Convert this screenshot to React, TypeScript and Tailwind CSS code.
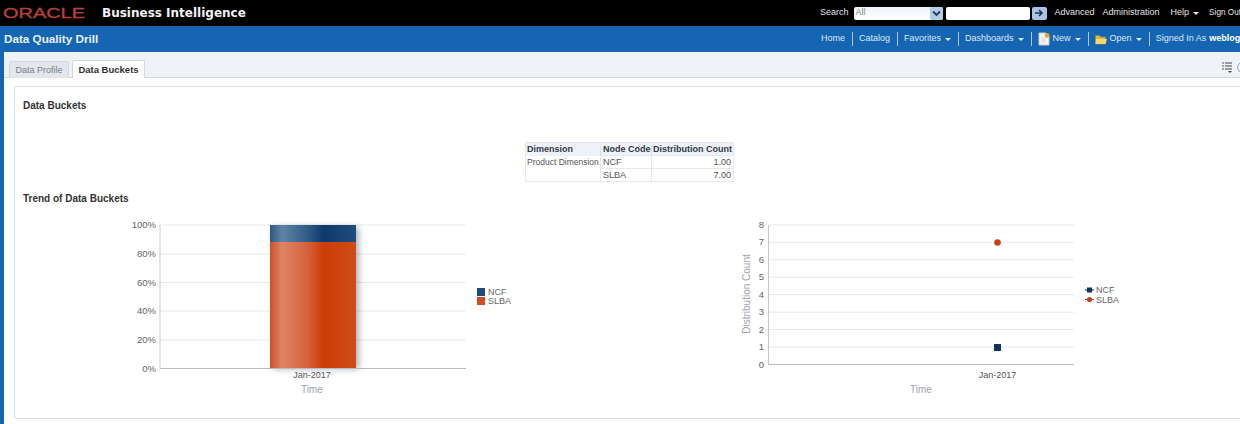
import React from "react";

const font = "font-['Liberation_Sans',Arial,sans-serif]";

function Caret({ color = "border-t-[#dce9f5]" }: { color?: string }) {
  return (
    <span
      className={`ml-[4px] inline-block h-0 w-0 border-x-[3px] border-t-[3px] border-x-transparent ${color}`}
    />
  );
}

function Sep() {
  return <span className="ml-[7px] mr-[6px] h-[14px] w-px shrink-0 bg-[#a9c6e2]" />;
}

function NewIcon() {
  return (
    <svg width="12" height="14" viewBox="0 0 12 14" className="mr-[3px]">
      <path d="M1 1h7l3 3v9H1z" fill="#f7f7f2" stroke="#c9c9c0" />
      <circle cx="9" cy="3.5" r="2.4" fill="#f0a030" />
      <path d="M3 6h5M3 8h5M3 10h5" stroke="#d5d5d5" />
    </svg>
  );
}

function OpenIcon() {
  return (
    <svg width="12" height="11" viewBox="0 0 12 11" className="mr-[3px]">
      <path d="M0.5 1.5h4l1 1.5h5v7h-10z" fill="#d9b64c" stroke="#a98a2c" strokeWidth="0.6" />
      <path d="M1 5h11l-1.5 5H0.5z" fill="#f2d878" />
    </svg>
  );
}

function TopBar() {
  return (
    <div className="flex h-[26px] items-center whitespace-nowrap bg-black text-[9px] text-[#e4e4e4]">
      <div className="flex w-[820px] shrink-0 items-center">
        <svg width="90" height="20" viewBox="0 0 90 20" className="ml-[2px]">
          <text
            x="1"
            y="15"
            fontFamily="Liberation Sans"
            fontSize="14"
            fill="#b8403a"
            stroke="#b8403a"
            strokeWidth="0.3"
            textLength="82"
            lengthAdjust="spacingAndGlyphs"
          >
            ORACLE
          </text>
        </svg>
        <span className="ml-[10px] font-['DejaVu_Sans',sans-serif] text-[12px] font-bold text-[#f2f2f2]">
          Business Intelligence
        </span>
      </div>
      <span>Search</span>
      <div className="ml-[5px] flex h-[13px] w-[89px] shrink-0 items-center justify-between rounded-[2px] bg-gradient-to-b from-[#eef3fa] to-white pl-[2px]">
        <span className="text-[9px] text-[#8a8a8a]">All</span>
        <span className="flex h-[13px] w-[13px] items-center justify-center rounded-[2px] bg-[#b4cbe4]">
          <svg width="9" height="7" viewBox="0 0 9 7">
            <path d="M1 1.5l3.5 3.5L8 1.5" fill="none" stroke="#23405f" strokeWidth="1.8" />
          </svg>
        </span>
      </div>
      <div className="ml-[3px] h-[13px] w-[84px] shrink-0 rounded-[2px] bg-white" />
      <span className="ml-[2px] flex h-[13px] w-[15px] shrink-0 items-center justify-center rounded-[2px] bg-[#a9c4e2]">
        <svg width="10" height="8" viewBox="0 0 10 8">
          <path d="M1 4h6M5 1l3 3-3 3" fill="none" stroke="#1c3550" strokeWidth="1.6" />
        </svg>
      </span>
      <span className="ml-[8px]">Advanced</span>
      <span className="ml-[8px]">Administration</span>
      <span className="ml-[11px] flex items-center">
        Help
        <Caret color="border-t-[#e4e4e4]" />
      </span>
      <span className="ml-[10px] text-[8.2px]">Sign Out</span>
    </div>
  );
}

function BlueBar() {
  return (
    <div className="flex h-[26px] items-center whitespace-nowrap bg-[#1565b2] text-[9px] text-[#dce9f5]">
      <div className="w-[821px] shrink-0 pl-[4px] text-[11.7px] font-bold text-[#e6f0fa]">
        Data Quality Drill
      </div>
      <span>Home</span>
      <Sep />
      <span>Catalog</span>
      <Sep />
      <span className="flex items-center">
        Favorites
        <Caret />
      </span>
      <Sep />
      <span className="flex items-center">
        Dashboards
        <Caret />
      </span>
      <Sep />
      <span className="flex items-center">
        <NewIcon />
        New
        <Caret />
      </span>
      <Sep />
      <span className="flex items-center">
        <OpenIcon />
        Open
        <Caret />
      </span>
      <Sep />
      <span>Signed In As</span>
      <span className="ml-[3px] font-bold text-white">weblogic</span>
    </div>
  );
}

function Tabs() {
  return (
    <div className="flex h-[26px] items-end justify-between rounded-tl-[3px] border-b border-[#d5d9dd] bg-[#eef2f6] pl-[5px]">
      <div className="flex items-end gap-[3px] text-[9px]">
        <div className="-mb-px flex h-[17px] w-[60px] items-center justify-center rounded-t-[2px] border border-b-0 border-[#d5d9dd] bg-[#e3e7eb] pt-[1px] text-[#77808a]">
          Data Profile
        </div>
        <div className="-mb-px flex h-[18px] w-[73px] items-center justify-center rounded-t-[2px] border border-b-0 border-[#d5d9dd] bg-white pt-[1px] text-[9.5px] font-bold text-[#333]">
          Data Buckets
        </div>
      </div>
      <div className="mb-[4px] mr-[6px] flex items-center gap-[4px]">
        <svg width="11" height="12" viewBox="0 0 11 12">
          <path d="M0 2h2M0 5h2M0 8h2" stroke="#555" />
          <path d="M3 2h7M3 5h7M3 8h7" stroke="#444" />
          <path d="M6 10h4l-2 2z" fill="#444" />
        </svg>
        <span className="h-[11px] w-[11px] rounded-full border border-[#7fa9cf]" />
      </div>
    </div>
  );
}

const rowCell = "h-[13px] border-t border-l border-[#e6eaee] px-[2px] py-0";

function DataTable() {
  return (
    <div className="flex justify-center">
      <table className="w-[209px] table-fixed border border-[#e6eaee] text-[9px] leading-[12px] text-[#555]">
        <thead>
          <tr className="bg-[#eef2f8] text-left text-[9px] font-bold text-[#2f3a45]">
            <th className="h-[13px] w-[75px] px-[1px] py-0">Dimension</th>
            <th className="w-[51px] whitespace-nowrap border-l border-[#dfe4ea] px-[2px] py-0">Node Code</th>
            <th className="whitespace-nowrap border-l border-[#dfe4ea] px-[1px] py-0">Distribution Count</th>
          </tr>
        </thead>
        <tbody>
          <tr>
            <td className="h-[13px] whitespace-nowrap px-[1px] py-0 text-[8.5px]">Product Dimension</td>
            <td className={rowCell}>NCF</td>
            <td className={`${rowCell} text-right`}>1.00</td>
          </tr>
          <tr>
            <td className="h-[13px] px-[1px] py-0" />
            <td className={rowCell}>SLBA</td>
            <td className={`${rowCell} text-right`}>7.00</td>
          </tr>
        </tbody>
      </table>
    </div>
  );
}

const chartFont = "Liberation Sans";

function BarChart() {
  const ticks = [
    ["100%", 15],
    ["80%", 44],
    ["60%", 72.5],
    ["40%", 101],
    ["20%", 130],
  ] as const;
  return (
    <svg width="400" height="190" viewBox="0 0 400 190" className="shrink-0">
      <defs>
        <linearGradient id="redBar" x1="0" x2="1" y1="0" y2="0">
          <stop offset="0" stopColor="#c9512b" />
          <stop offset="0.14" stopColor="#dd8464" />
          <stop offset="0.45" stopColor="#d5603a" />
          <stop offset="0.62" stopColor="#cc3c06" />
          <stop offset="1" stopColor="#d04c18" />
        </linearGradient>
        <linearGradient id="blueBar" x1="0" x2="1" y1="0" y2="0">
          <stop offset="0" stopColor="#31577f" />
          <stop offset="0.14" stopColor="#5f83a5" />
          <stop offset="0.45" stopColor="#2f5a86" />
          <stop offset="0.62" stopColor="#0c3a6b" />
          <stop offset="1" stopColor="#1f4c7a" />
        </linearGradient>
        <filter id="barShadow" x="-20%" y="-5%" width="140%" height="110%">
          <feGaussianBlur stdDeviation="3" />
        </filter>
      </defs>
      {ticks.map(([label, y]) => (
        <g key={label}>
          <line x1="40" x2="346" y1={y} y2={y} stroke="#e6e8eb" />
          <text x="36" y={y + 3} textAnchor="end" fontFamily={chartFont} fontSize="9.5" fill="#666">
            {label}
          </text>
        </g>
      ))}
      <text x="36" y="161.5" textAnchor="end" fontFamily={chartFont} fontSize="9.5" fill="#666">
        0%
      </text>
      <rect x="153" y="17" width="86" height="142" fill="#6d7680" opacity="0.55" filter="url(#barShadow)" />
      <line x1="40" x2="40" y1="15" y2="158.5" stroke="#c5c9ce" />
      <rect x="150" y="15" width="86" height="17" fill="url(#blueBar)" />
      <rect x="150" y="32" width="86" height="126.5" fill="url(#redBar)" />
      <line x1="40" x2="346" y1="158.5" y2="158.5" stroke="#b9bdc2" />
      <text x="192" y="168" textAnchor="middle" fontFamily={chartFont} fontSize="9" fill="#555">
        Jan-2017
      </text>
      <text x="192" y="183" textAnchor="middle" fontFamily={chartFont} fontSize="10" fill="#a0a3ad">
        Time
      </text>
      <rect x="357" y="78" width="8" height="8" fill="#1f4c7a" />
      <rect x="357" y="87" width="8" height="8" fill="#cf4f22" />
      <text x="368" y="84.5" fontFamily={chartFont} fontSize="9" fill="#666">
        NCF
      </text>
      <text x="368" y="93.5" fontFamily={chartFont} fontSize="9" fill="#666">
        SLBA
      </text>
    </svg>
  );
}

function LineChart() {
  const ticks = [8, 7, 6, 5, 4, 3, 2, 1];
  return (
    <svg width="400" height="190" viewBox="0 0 400 190" className="ml-[210px] shrink-0">
      {ticks.map((t) => {
        const y = 154.5 - t * 17.45;
        return (
          <g key={t}>
            <line x1="38.5" x2="344" y1={y} y2={y} stroke="#e6e8eb" />
            <text x="34" y={y + 3} textAnchor="end" fontFamily={chartFont} fontSize="9.5" fill="#666">
              {t}
            </text>
          </g>
        );
      })}
      <text x="34" y="158" textAnchor="end" fontFamily={chartFont} fontSize="9.5" fill="#666">
        0
      </text>
      <line x1="38.5" x2="38.5" y1="15" y2="154.5" stroke="#c5c9ce" />
      <line x1="38.5" x2="344" y1="154.5" y2="154.5" stroke="#b9bdc2" />
      <text
        transform="translate(19.5 84) rotate(-90)"
        textAnchor="middle"
        fontFamily={chartFont}
        fontSize="10"
        fill="#a0a3ad"
      >
        Distribution Count
      </text>
      <circle cx="267.5" cy="32.5" r="3.3" fill="#c4441a" />
      <rect x="264" y="134" width="7" height="7" fill="#0e3560" />
      <text x="267.5" y="168" textAnchor="middle" fontFamily={chartFont} fontSize="9" fill="#555">
        Jan-2017
      </text>
      <text x="191" y="183" textAnchor="middle" fontFamily={chartFont} fontSize="10" fill="#a0a3ad">
        Time
      </text>
      <line x1="355" x2="364" y1="80" y2="80" stroke="#0e3560" />
      <rect x="357" y="77.5" width="5" height="5" fill="#0e3560" />
      <line x1="355" x2="364" y1="89.5" y2="89.5" stroke="#c4441a" />
      <circle cx="359.5" cy="89.5" r="2.6" fill="#c4441a" />
      <text x="366" y="83" fontFamily={chartFont} fontSize="9" fill="#666">
        NCF
      </text>
      <text x="366" y="92.5" fontFamily={chartFont} fontSize="9" fill="#666">
        SLBA
      </text>
    </svg>
  );
}

export default function App() {
  return (
    <div className={`h-[424px] w-[1240px] overflow-hidden bg-[#1565b2] ${font}`}>
      <TopBar />
      <BlueBar />
      <div className="ml-[4px] h-[372px] w-[1250px] bg-white">
        <Tabs />
        <div className="pl-[10px] pt-[8px]">
          <div className="h-[333px] w-[1231px] rounded-[2px] border border-[#dcdfe3]">
            <h2 className="pl-[8px] pt-[12px] text-[10px] font-bold leading-[14px] text-[#333]">
              Data Buckets
            </h2>
            <div className="pt-[29px]">
              <DataTable />
            </div>
            <h2 className="pb-[4px] pl-[8px] pt-[10px] text-[10px] font-bold leading-[14px] text-[#333]">
              Trend of Data Buckets
            </h2>
            <div className="flex pl-[105px]">
              <BarChart />
              <LineChart />
            </div>
          </div>
        </div>
      </div>
    </div>
  );
}
